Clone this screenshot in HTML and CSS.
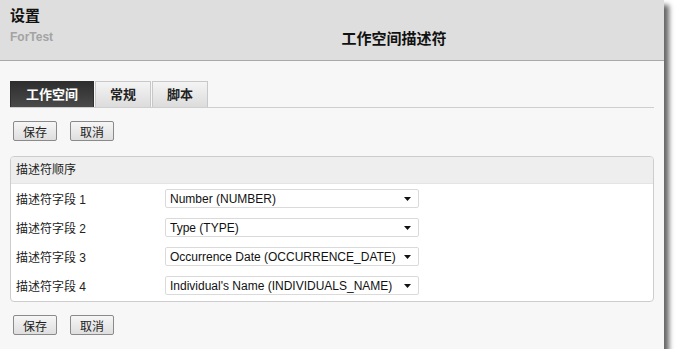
FILE: index.html
```html
<!DOCTYPE html>
<html lang="zh-CN">
<head>
  <meta charset="UTF-8" />
  <title>设置</title>
  <link rel="stylesheet" href="styles.css">
</head>
<body>
  <div class="window">
    <div class="header">
      <div class="title">设置</div>
      <div class="header-row">
        <div class="project">ForTest</div>
        <div class="page-title">工作空间描述符</div>
      </div>
    </div>

    <div class="content">
      <div class="tabs">
        <div class="tab active">工作空间</div>
        <div class="tab">常规</div>
        <div class="tab">脚本</div>
      </div>

      <div class="buttons">
        <button class="btn">保存</button>
        <button class="btn">取消</button>
      </div>

      <div class="panel">
        <div class="panel-head">描述符顺序</div>
        <div class="panel-body">
          <div class="row">
            <span class="label">描述符字段 1</span>
            <div class="select"><span>Number (NUMBER)</span><svg width="7" height="4" viewBox="0 0 7 4"><path d="M0 0h7L3.5 4z" fill="#111"/></svg></div>
          </div>
          <div class="row">
            <span class="label">描述符字段 2</span>
            <div class="select"><span>Type (TYPE)</span><svg width="7" height="4" viewBox="0 0 7 4"><path d="M0 0h7L3.5 4z" fill="#111"/></svg></div>
          </div>
          <div class="row">
            <span class="label">描述符字段 3</span>
            <div class="select"><span>Occurrence Date (OCCURRENCE_DATE)</span><svg width="7" height="4" viewBox="0 0 7 4"><path d="M0 0h7L3.5 4z" fill="#111"/></svg></div>
          </div>
          <div class="row">
            <span class="label">描述符字段 4</span>
            <div class="select"><span>Individual's Name (INDIVIDUALS_NAME)</span><svg width="7" height="4" viewBox="0 0 7 4"><path d="M0 0h7L3.5 4z" fill="#111"/></svg></div>
          </div>
        </div>
      </div>

      <div class="buttons bottom">
        <button class="btn">保存</button>
        <button class="btn">取消</button>
      </div>
    </div>
  </div>
</body>
</html>
```

FILE: styles.css
```css
body {
  margin: 0;
  background: #fff;
  font-family: "Liberation Sans", Arial, "Noto Sans CJK SC", sans-serif;
  font-size: 12px;
  color: #222;
}

.window {
  width: 664px;
  height: 349px;
  background: #f7f7f7;
  box-shadow: 5px 5px 5px rgba(0, 0, 0, 0.6);
  display: flex;
  flex-direction: column;
}

.header {
  height: 61px;
  background: #dedede;
  border-bottom: 1px solid #a9a9a9;
  padding: 7px 0 0 10px;
  box-sizing: border-box;
}

.title {
  font-size: 15px;
  font-weight: bold;
  color: #111;
  line-height: 18px;
}

.header-row {
  display: flex;
  align-items: center;
  height: 18px;
  margin-top: 3px;
}

.project {
  width: 114px;
  color: #a3a3a3;
  font-weight: bold;
}

.page-title {
  flex: 1;
  text-align: center;
  font-weight: bold;
  font-size: 15px;
  color: #111;
}

.content {
  padding: 20px 10px 0 10px;
}

.tabs {
  display: flex;
  border-bottom: 1px solid #cfcfcf;
}

.tab {
  height: 26px;
  line-height: 25px;
  width: 56px;
  text-align: center;
  font-weight: bold;
  font-size: 13px;
  color: #222;
  background: linear-gradient(#f4f4f4, #dcdcdc);
  border: 1px solid #c8c8c8;
  border-bottom: none;
  box-sizing: border-box;
  margin-right: 1px;
}

.tab.active {
  width: 84px;
  color: #fff;
  background: linear-gradient(#2e2e2e, #4a4a4a);
  border-color: #2e2e2e;
}

.buttons {
  display: flex;
  gap: 13px;
  margin: 13px 0 0 3px;
}

.btn {
  width: 44px;
  height: 20px;
  padding: 0;
  font-family: "Noto Sans CJK SC", sans-serif;
  font-size: 12px;
  color: #222;
  background: linear-gradient(#f6f6f6, #dedede);
  border: 1px solid #8a8a8a;
  border-radius: 2px;
}

.panel {
  margin-top: 15px;
  background: #fff;
  border: 1px solid #cdcdcd;
  border-radius: 4px;
  overflow: hidden;
}

.panel-head {
  height: 26px;
  line-height: 26px;
  padding-left: 5px;
  background: #eeeeee;
  border-bottom: 1px solid #e4e4e4;
}

.panel-body {
  padding: 0 0 1px 5px;
}

.row {
  display: flex;
  align-items: center;
  height: 29px;
}

.label {
  width: 149px;
}

.select {
  width: 254px;
  height: 19px;
  border: 1px solid #dadada;
  border-radius: 2px;
  background: #fff;
  display: flex;
  align-items: center;
  justify-content: space-between;
  padding: 0 7px 0 4px;
  box-sizing: border-box;
  color: #111;
}

.select svg {
  margin-top: 1px;
}

.buttons.bottom {
  margin-top: 13px;
}
```
